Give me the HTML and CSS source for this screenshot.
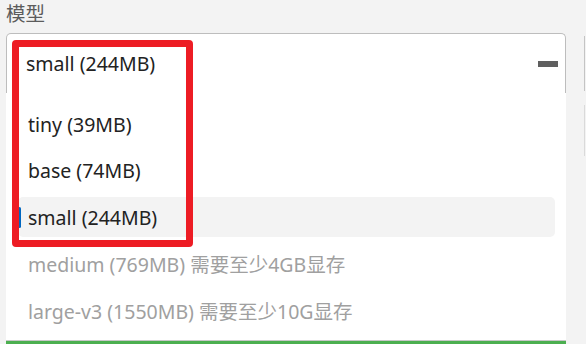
FILE: index.html
```html
<!DOCTYPE html>
<html lang="zh-CN">
<head>
    <meta charset="UTF-8">
    <meta name="viewport" content="width=device-width, initial-scale=1.0">
    <title>模型</title>
    <link rel="stylesheet" href="styles.css">
</head>
<body>
    <div class="page">
        <div class="main-col">
            <div class="label">模型</div>
            <div class="combo">
                <span class="combo-value">small (244MB)</span>
                <span class="combo-dash"></span>
            </div>
            <div class="dropdown">
                <div class="item">tiny (39MB)</div>
                <div class="item">base (74MB)</div>
                <div class="item selected"><span class="marker"></span>small (244MB)</div>
                <div class="item disabled">medium (769MB) 需要至少4GB显存</div>
                <div class="item disabled">large-v3 (1550MB) 需要至少10G显存</div>
            </div>
            <div class="green-bar"></div>
            <div class="highlight-box"></div>
        </div>
        <div class="side-col">
            <div class="side-box first"></div>
            <div class="side-box second"></div>
        </div>
    </div>
</body>
</html>
```

FILE: styles.css
```css
body {
    margin: 0;
    padding: 0;
    background-color: #f3f3f3;
    font-family: "Noto Sans", "Noto Sans CJK SC", sans-serif;
    overflow: hidden;
}
.page {
    display: flex;
    height: 344px;
}
.main-col {
    position: relative;
    width: 561px;
    margin-left: 6px;
}
.label {
    height: 33px;
    font-size: 19.5px;
    line-height: 28px;
    color: #5c5c5c;
}
.combo {
    box-sizing: border-box;
    height: 60px;
    background-color: #fff;
    border: 1px solid #bdbdbd;
    border-bottom: none;
    border-radius: 5px 5px 0 0;
    display: flex;
    align-items: center;
    justify-content: space-between;
    padding: 0 7px 0 19px;
}
.combo-value {
    font-size: 19.5px;
    color: #222;
}
.combo-dash {
    width: 20px;
    height: 6px;
    background-color: #5f5f5f;
}
.dropdown {
    box-sizing: border-box;
    height: 248px;
    background-color: #fff;
    border-bottom: 1px solid #c8c8c8;
    padding: 11px 11px 0 12px;
    display: flex;
    flex-direction: column;
    gap: 6.5px;
}
.item {
    position: relative;
    height: 40px;
    display: flex;
    align-items: center;
    padding-left: 10px;
    font-size: 19.5px;
    color: #222;
    border-radius: 5px;
}
.item.selected {
    background-color: #f3f3f3;
}
.item.disabled {
    color: #a0a0a0;
}
.marker {
    position: absolute;
    left: 0;
    top: 10px;
    width: 3px;
    height: 21px;
    border-radius: 2px;
    background-color: #0067c0;
}
.green-bar {
    height: 3px;
    background-color: #4caf50;
}
.highlight-box {
    position: absolute;
    left: 6px;
    top: 40px;
    width: 181px;
    height: 207px;
    box-sizing: border-box;
    border: 7px solid #ed1c24;
    border-radius: 4px;
}
.side-col {
    margin-left: 18px;
    padding-top: 36px;
    display: flex;
    flex-direction: column;
    gap: 14px;
}
.side-box {
    width: 1px;
    border-left: 1px solid #c4c4c4;
}
.side-box.first {
    height: 55px;
}
.side-box.second {
    height: 51px;
    border-left-color: #dadada;
}
```
